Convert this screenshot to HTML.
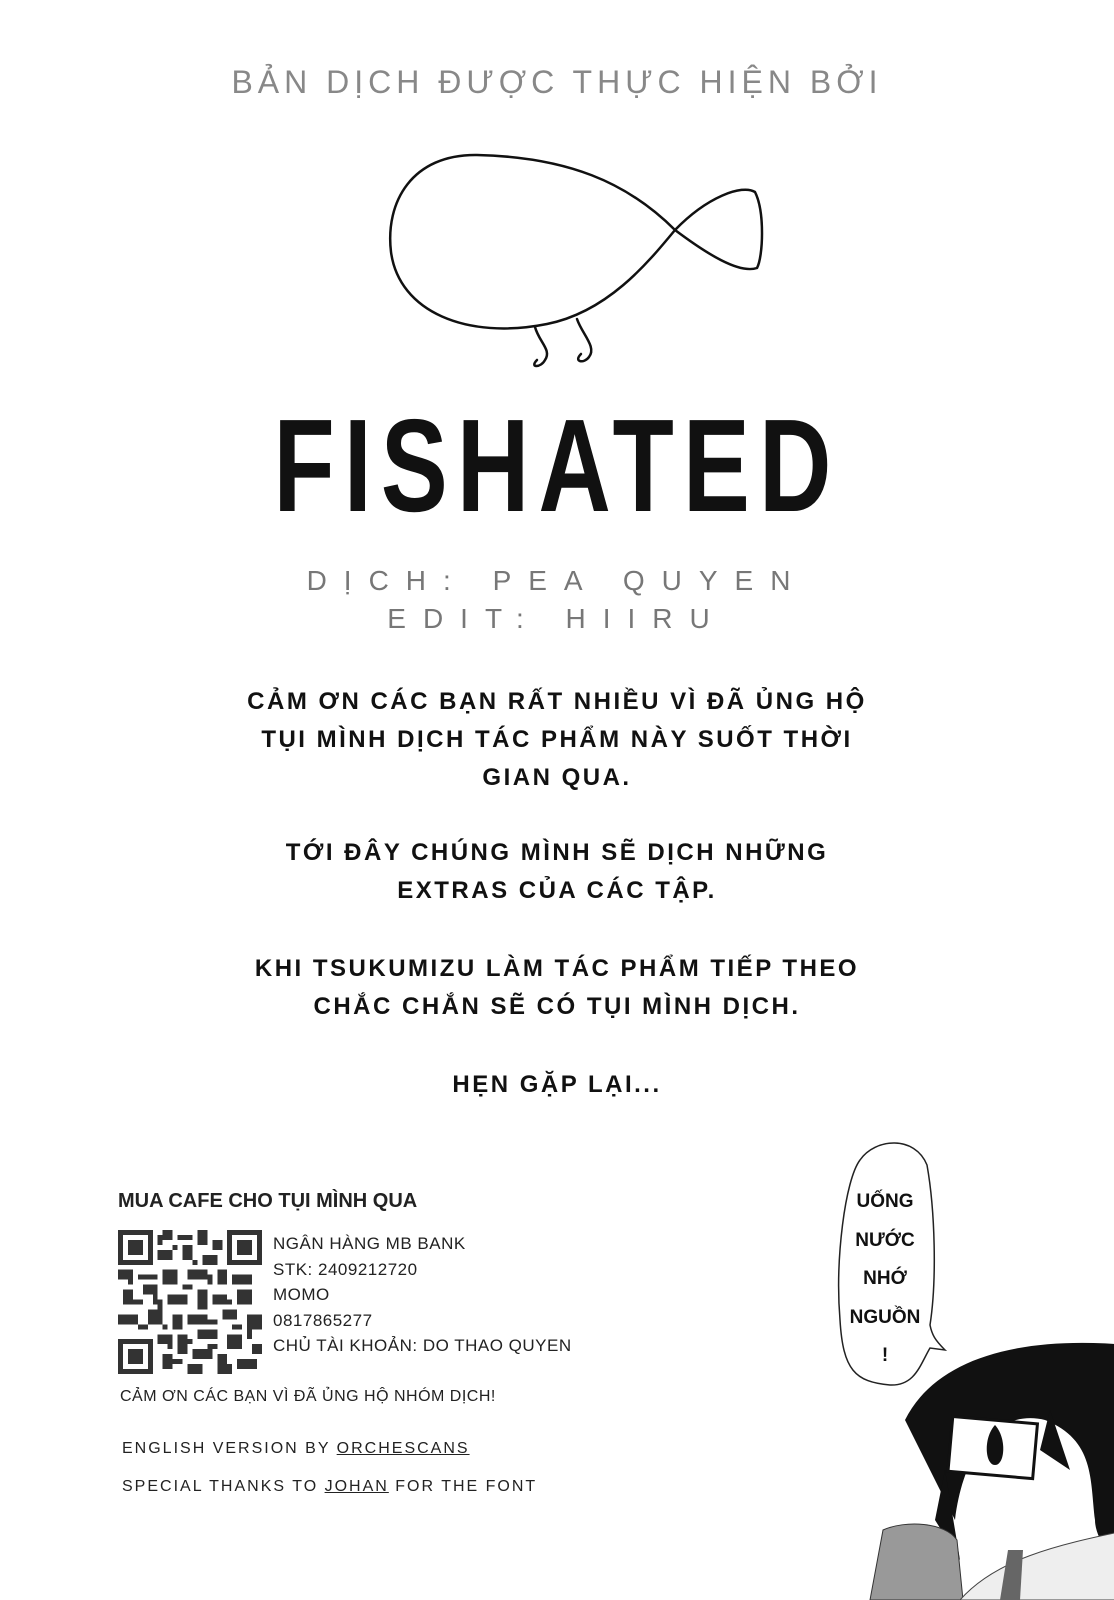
<!DOCTYPE html>
<html><head><meta charset="utf-8"><style>
*{margin:0;padding:0;box-sizing:border-box}
body{width:1114px;height:1600px;background:#fff;position:relative;overflow:hidden;font-family:"Liberation Sans",sans-serif;color:#111}
.a{position:absolute;white-space:nowrap}
.c{left:0;width:1114px;text-align:center}
.hd{top:64px;font-size:32px;letter-spacing:5px;color:#888}
.ti{top:400px;font-size:132px;font-weight:bold;letter-spacing:12px;transform:scaleX(.76);transform-origin:557px 0;line-height:1}
.cr{font-size:28px;letter-spacing:17px;color:#777;line-height:38px}
.b{font-size:24px;font-weight:bold;letter-spacing:2.5px;line-height:38px}
.s{font-size:17px;letter-spacing:.5px;color:#222}
</style></head><body>
<div class="a c hd">BẢN DỊCH ĐƯỢC THỰC HIỆN BỞI</div>
<svg class="a" style="left:7px;top:2px" width="1114" height="400">
<g fill="none" stroke="#111" stroke-width="2.5" stroke-linecap="round">
<path d="M668,228 C620,180 560,155 470,153 C405,152 378,200 384,250 C392,310 460,338 540,322 C600,310 640,262 668,228 C700,195 735,182 748,190 C758,210 756,255 750,266 C732,272 700,252 668,228"/>
<path d="M528,325 C532,340 545,348 538,358 C534,366 522,366 530,358"/>
<path d="M570,317 C575,332 590,345 582,355 C577,362 566,360 574,352"/>
</g></svg>
<div class="a c ti">FISHATED</div>
<div class="a c cr" style="top:562px">DỊCH: PEA QUYEN</div>
<div class="a c cr" style="top:600px">EDIT: HIIRU</div>
<div class="a c b" style="top:683px">CẢM ƠN CÁC BẠN RẤT NHIỀU VÌ ĐÃ ỦNG HỘ<br>TỤI MÌNH DỊCH TÁC PHẨM NÀY SUỐT THỜI<br>GIAN QUA.</div>
<div class="a c b" style="top:834px">TỚI ĐÂY CHÚNG MÌNH SẼ DỊCH NHỮNG<br>EXTRAS CỦA CÁC TẬP.</div>
<div class="a c b" style="top:950px">KHI TSUKUMIZU LÀM TÁC PHẨM TIẾP THEO<br>CHẮC CHẮN SẼ CÓ TỤI MÌNH DỊCH.</div>
<div class="a c b" style="top:1066px">HẸN GẶP LẠI...</div>
<div class="a" style="left:118px;top:1190px;font-size:20px;font-weight:bold;color:#222">MUA CAFE CHO TỤI MÌNH QUA</div>
<svg class="a" style="left:118px;top:1230px" width="144" height="144" viewBox="0 0 29 29" shape-rendering="crispEdges">
<rect width="29" height="29" fill="#fff"/>
<g fill="#333">
<path d="M0 0h7v7h-7zM1 1v5h5v-5zM2 2h3v3h-3zM22 0h7v7h-7zM23 1v5h5v-5zM24 2h3v3h-3zM0 22h7v7h-7zM1 23v5h5v-5zM2 24h3v3h-3z" fill-rule="evenodd"/>
<path d="M9 0h2v2h-2zM12 1h3v1h-3zM16 0h2v3h-2zM19 2h2v2h-2zM8 4h3v2h-3zM13 3h2v3h-2zM17 5h3v2h-3zM0 8h3v2h-3zM4 9h4v1h-4zM9 8h3v3h-3zM14 8h4v2h-4zM20 8h2v3h-2zM23 9h4v2h-4zM1 12h2v3h-2zM5 11h3v2h-3zM10 13h4v2h-4zM16 12h2v4h-2zM19 13h3v2h-3zM24 12h3v3h-3zM0 17h4v2h-4zM6 16h3v3h-3zM11 17h2v3h-2zM14 17h4v2h-4zM21 16h3v2h-3zM26 17h3v3h-3zM8 21h3v2h-3zM12 21h2v4h-2zM16 20h4v2h-4zM22 21h3v3h-3zM9 25h2v3h-2zM15 24h4v2h-4zM20 25h2v4h-2zM24 26h4v2h-4zM14 27h3v2h-3zM27 23h2v2h-2zM10 5h1v1h-1zM3 14h2v1h-2zM8 14h1v2h-1zM8 1h1v2h-1zM11 3h1v1h-1zM15 6h1v1h-1zM18 9h1v2h-1zM2 10h1v1h-1zM7 13h1v2h-1zM13 11h2v1h-2zM22 14h1v1h-1zM4 19h2v1h-2zM9 19h1v1h-1zM18 18h2v1h-2zM23 19h2v1h-2zM10 23h1v1h-1zM14 22h1v1h-1zM18 23h2v1h-2zM26 20h1v2h-1zM11 26h2v1h-2zM22 27h1v2h-1z"/>
</g></svg>
<div class="a s" style="left:273px;top:1231px;line-height:25.5px">NGÂN HÀNG MB BANK<br>STK: 2409212720<br>MOMO<br>0817865277<br>CHỦ TÀI KHOẢN: DO THAO QUYEN</div>
<div class="a s" style="left:120px;top:1388px;font-size:16px">CẢM ƠN CÁC BẠN VÌ ĐÃ ỦNG HỘ NHÓM DỊCH!</div>
<div class="a s" style="left:122px;top:1440px;font-size:16px;letter-spacing:2px">ENGLISH VERSION BY <u>ORCHESCANS</u></div>
<div class="a s" style="left:122px;top:1478px;font-size:16px;letter-spacing:2px">SPECIAL THANKS TO <u>JOHAN</u> FOR THE FONT</div>
<svg class="a" style="left:795px;top:1120px" width="334" height="480">
<path d="M65,40 C50,60 40,140 45,200 C48,250 60,262 95,265 C120,266 125,245 135,228 L150,230 C140,220 137,215 135,205 C142,160 140,90 132,45 C120,15 80,18 65,40Z" fill="#fff" stroke="#222" stroke-width="1.5"/>
<path d="M110,300 C140,240 220,215 334,225 L334,480 C320,440 300,420 300,400 C295,360 300,320 250,300 C210,290 170,320 160,400 L140,360 Z" fill="#111"/>
<path d="M150,350 L165,440 L140,400 Z M255,290 L275,350 L245,330Z" fill="#111"/>
<rect x="155" y="300" width="85" height="55" fill="#fff" stroke="#111" stroke-width="3" transform="rotate(5 197 330)"/>
<path d="M200,305 C212,318 210,345 200,345 C190,345 188,318 200,305Z" fill="#111"/>
<path d="M75,480 L88,410 C110,400 150,402 162,420 L168,480Z" fill="#999" stroke="#333"/>
<path d="M165,480 C200,440 260,425 334,410 L334,480Z" fill="#eee" stroke="#444"/>
<path d="M213,430 L228,430 L225,480 L205,480Z" fill="#666"/>
</svg>
<div class="a" style="left:785px;top:1183px;width:200px;display:block;text-align:center;font-size:19px;font-weight:bold;line-height:38.5px;color:#111">UỐNG<br>NƯỚC<br>NHỚ<br>NGUỒN<br>!</div>
</body></html>
